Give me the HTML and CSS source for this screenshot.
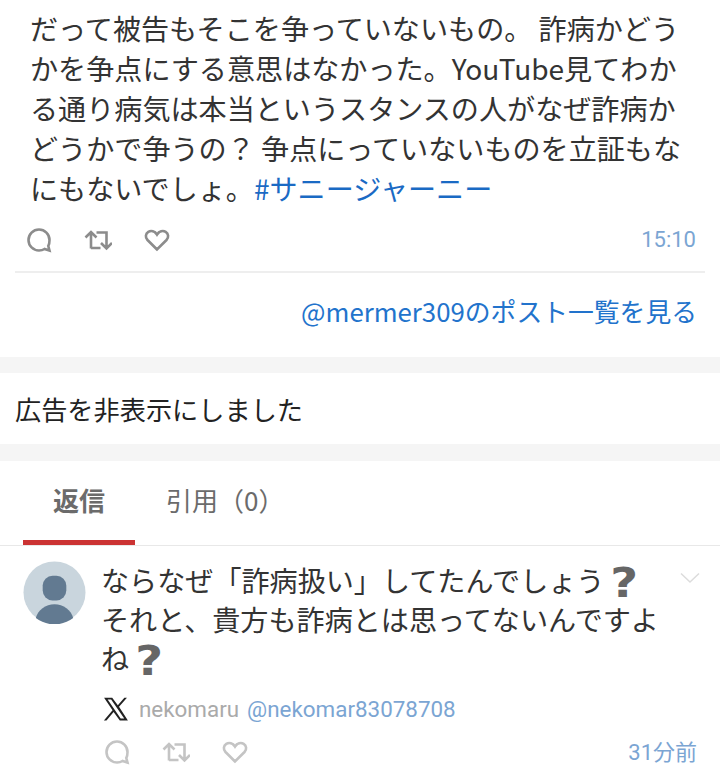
FILE: index.html
```html
<!DOCTYPE html>
<html lang="ja">
  <head>
    <meta charset="UTF-8" />
    <title>post</title>
    <link rel="stylesheet" href="styles.css">
  </head>
  <body>
    <section class="post">
      <p class="post-text">だって被告もそこを争っていないもの。 詐病かどう<br>かを争点にする意思はなかった。YouTube見てわか<br>る通り病気は本当というスタンスの人がなぜ詐病か<br>どうかで争うの？ 争点にっていないものを立証もな<br>にもないでしょ。<a class="link" href="#">#サニージャーニー</a></p>
      <div class="actions">
        <svg class="icon icon-reply" viewBox="0 0 26 26"><path d="M13 2.500a10.500 10.500 0 1 0 0 21c2.500 0 4-.5 5.500-1.500l5 1.500-1.200-4.500c1-1.500 1.200-3.500 1.200-6A10.500 10.500 0 0 0 13 2.500z"/></svg>
        <svg class="icon icon-repost" viewBox="0 0 28 26"><path d="M7 21.500V5M1.500 10.500 7 5l5.500 5.500M12.500 5.500h10v16M17 16l5.500 5.500L28 16M7 21h9.500"/></svg>
        <svg class="icon icon-like" viewBox="0 0 26 26"><path d="M13 22.500 3.500 13C1 10.300 1.500 6.500 4.300 4.800c2.700-1.500 6.500-.8 8.700 2.700 2.200-3.500 6-4.200 8.700-2.700 2.800 1.700 3.300 5.500.8 8.200z"/></svg>
        <span class="time">15:10</span>
      </div>
      <div class="more"><a class="link" href="#">@mermer309のポスト一覧を見る</a></div>
    </section>
    <div class="ad">広告を非表示にしました</div>
    <nav class="tabs">
      <a class="tab tab-active">返信</a>
      <a class="tab">引用（0）</a>
    </nav>
    <article class="reply">
      <svg class="avatar" viewBox="0 0 64 64">
        <circle cx="32" cy="32" r="31.500" fill="#c9d5dd"/>
        <rect x="20" y="15" width="24" height="25" rx="10" fill="#627a91"/>
        <path d="M13 58c2-8 10-14 19-14s17 6 19 14a31.500 31.500 0 0 1-38 0z" fill="#627a91"/>
      </svg>
      <div class="reply-body">
        <svg class="chevron" viewBox="0 0 20 12"><path d="M1 1.500 10 10l9-8.500"/></svg>
        <p class="reply-text">ならなぜ「詐病扱い」してたんでしょう<span class="mark">?</span><br>それと、貴方も詐病とは思ってないんですよ<br>ね<span class="mark">?</span></p>
        <div class="author">
          <svg class="x-logo" viewBox="0 0 24 24"><path fill-rule="evenodd" d="M1 1.500h7.500l5.200 7 6-7h2.400l-7.300 8.500L23 22.500h-7.500l-5.700-7.700-6.600 7.700H.8l8-9.400zM4.300 3.200l12 17.600h3.300L7.500 3.200z"/></svg>
          <span class="author-name">nekomaru</span>
          <span class="author-id">@nekomar83078708</span>
        </div>
        <div class="actions reply-actions">
          <svg class="icon icon-reply" viewBox="0 0 26 26"><path d="M13 2.500a10.500 10.500 0 1 0 0 21c2.500 0 4-.5 5.500-1.500l5 1.500-1.200-4.500c1-1.500 1.200-3.500 1.200-6A10.500 10.500 0 0 0 13 2.500z"/></svg>
          <svg class="icon icon-repost" viewBox="0 0 28 26"><path d="M7 21.500V5M1.500 10.500 7 5l5.500 5.500M12.500 5.500h10v16M17 16l5.500 5.500L28 16M7 21h9.500"/></svg>
          <svg class="icon icon-like" viewBox="0 0 26 26"><path d="M13 22.500 3.500 13C1 10.300 1.500 6.500 4.300 4.800c2.700-1.500 6.500-.8 8.700 2.700 2.200-3.500 6-4.200 8.700-2.700 2.800 1.700 3.300 5.500.8 8.200z"/></svg>
          <span class="time">31分前</span>
        </div>
      </div>
    </article>
  </body>
</html>
```

FILE: styles.css
```css
html,
body {
  height: 779px;
  overflow: hidden;
}
body {
  margin: 0;
  background: white;
  color: #333;
  font-family: "Noto Sans CJK JP", "Noto Sans", sans-serif;
}
p {
  margin: 0;
}
.link {
  color: #1a6ac4;
  text-decoration: none;
}
.post {
  padding: 8px 15px 0;
  border-bottom: 16px solid #f5f5f5;
}
.post-text {
  padding-left: 15px;
  font-size: 28.100px;
  line-height: 40px;
  white-space: nowrap;
}
.actions {
  display: flex;
  align-items: center;
  gap: 32px;
  color: #8c8c8c;
}
.post .actions {
  height: 63px;
  padding: 0 9px 0 11px;
  border-bottom: 2px solid #eee;
}
.icon {
  flex: none;
  height: 26px;
  fill: none;
  stroke: currentColor;
  stroke-width: 2.600;
}
.icon-reply,
.icon-like {
  width: 26px;
}
.icon-repost {
  width: 28px;
}
.time {
  margin-left: auto;
  font-family: Roboto, "Noto Sans CJK JP", sans-serif;
  font-size: 22px;
  color: #7ba5d3;
}
.more {
  padding: 20px 8px 28px;
  text-align: right;
  font-size: 25.800px;
  line-height: 36px;
}
.more .link {
  color: #2273cc;
}
.ad {
  padding: 0 15px;
  height: 71px;
  line-height: 72px;
  border-bottom: 17px solid #f5f5f5;
  font-size: 26.200px;
  color: #222;
}
.tabs {
  display: flex;
  height: 84px;
  padding-left: 23px;
  border-bottom: 1px solid #e8e8e8;
}
.tab {
  width: 112px;
  margin-right: 31px;
  line-height: 77px;
  text-align: center;
  font-size: 26px;
  color: #6b6b6b;
}
.tab-active {
  height: 84px;
  border-bottom: 5px solid #cb3333;
  box-sizing: border-box;
  font-weight: bold;
}
.reply {
  display: flex;
  padding: 15px 23px 0;
  gap: 15px;
}
.avatar {
  flex: none;
  width: 63px;
  height: 63px;
}
.reply-body {
  position: relative;
  flex: 1;
  min-width: 0;
}
.chevron {
  position: absolute;
  top: 11px;
  right: -3px;
  width: 20px;
  height: 12px;
  fill: none;
  stroke: #dcdcdc;
  stroke-width: 1.500;
}
.reply-text {
  margin-top: -1px;
  font-size: 28.100px;
  line-height: 39px;
  white-space: nowrap;
}
.mark {
  display: inline-block;
  margin: 0 8px 0 11px;
  font-family: "DejaVu Sans", sans-serif;
  font-weight: bold;
  font-size: 32px;
  line-height: 30px;
  color: #666;
  transform: translateY(2px) scale(1.500, 1.250);
}
.author {
  display: flex;
  align-items: center;
  gap: 10px;
  height: 30px;
  margin-top: 17px;
  font-family: Roboto, sans-serif;
  font-size: 22.400px;
}
.x-logo {
  width: 26px;
  height: 26px;
  margin-left: 2px;
  fill: #222;
}
.author-name {
  color: #aaa;
}
.author-id {
  margin-left: -2px;
  color: #7ba5d3;
}
.reply-actions {
  margin-top: 10px;
  margin-left: 3px;
  height: 36px;
  color: #c4c4c4;
}
.reply-actions .time {
  margin-bottom: 5px;
}
```
